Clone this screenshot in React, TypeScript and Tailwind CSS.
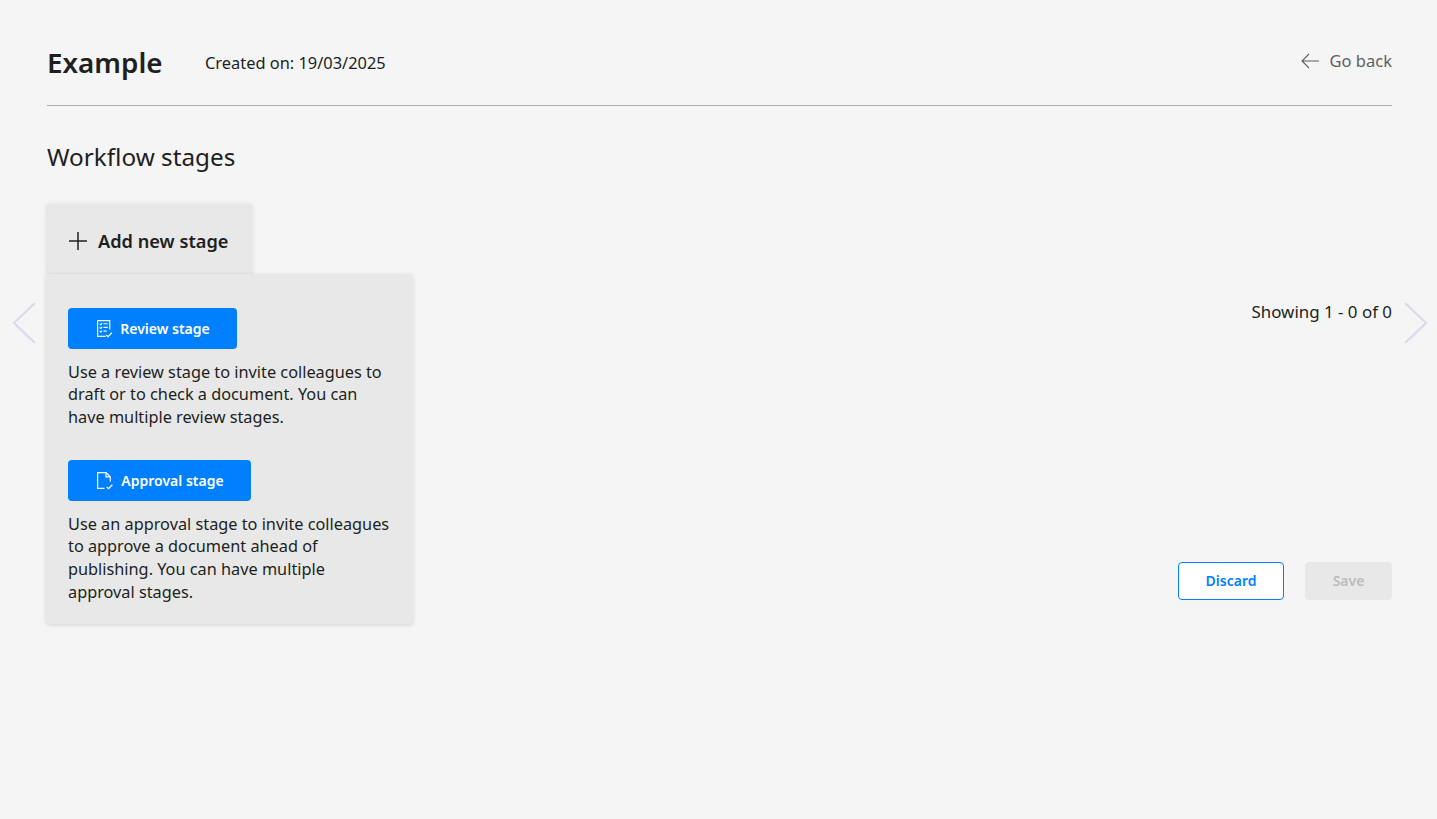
import React from "react";

const font = { fontFamily: '"Noto Sans", sans-serif' };

function ReviewIcon() {
  return (
    <svg width="17" height="19" viewBox="0 0 16 18" fill="none" stroke="white" strokeWidth="1.1">
      <path d="M9 16.5H1.5V1.5H13V10" />
      <path d="M3.5 4.5l1 1 1.2-1.6M3.5 8l1 1 1.2-1.6M3.5 11.5l1 1 1.2-1.6" strokeWidth="1" />
      <path d="M7 4.5h4M7 8h4M7 11.5h3" />
      <path d="M9.5 15l1.8 1.8L15 13" />
    </svg>
  );
}

function ApprovalIcon() {
  return (
    <svg width="18" height="19" viewBox="0 0 17 18" fill="none" stroke="white" strokeWidth="1.1">
      <path d="M8 16.5H1.5V1.5H9.5L13.5 5.5V10" />
      <path d="M9.5 1.5V5.5H13.5" />
      <path d="M10 15l1.8 1.8L15.5 13" />
    </svg>
  );
}

function Chevron({ left }: { left?: boolean }) {
  return (
    <svg width="26" height="44" viewBox="0 0 26 44" fill="none" stroke="#dfdae9" strokeWidth="2.4">
      <path d={left ? "M24 2L3 22l21 20" : "M2 2l21 20L2 42"} />
    </svg>
  );
}

export default function App() {
  return (
    <div className="relative h-[819px] bg-[#f5f5f5] pl-[47px] pr-[45px] pt-[40px] text-[#201f1e] overflow-hidden" style={font}>
      <header className="flex items-start justify-between border-b border-[#ababab] h-[66px]">
        <div className="flex items-center h-[46px]">
          <h1 className="w-[158px] pb-[1px] text-[27.8px] font-semibold leading-[45px]">Example</h1>
          <span className="text-[16.4px] leading-[46px]">Created on: 19/03/2025</span>
        </div>
        <a className="flex items-center gap-[11px] h-[42px] text-[16.5px] text-[#605e5c]">
          <svg width="18" height="16" viewBox="0 0 18 16" fill="none" stroke="#605e5c" strokeWidth="1.1">
            <path d="M8 1L1 8l7 7M1 8h17" />
          </svg>
          Go back
        </a>
      </header>

      <h2 className="mt-[33px] text-[24.3px] leading-[36px] font-normal">Workflow stages</h2>

      <div className="mt-[29px] flex">
        <div className="-ml-px w-[367px] shrink-0">
          <div className="flex h-[70px] w-[207px] items-center gap-[11px] rounded-t bg-[#e8e8e8] pl-[23px] pt-[4px] shadow-[0_0_5px_rgba(0,0,0,0.08)]">
            <svg width="18" height="18" viewBox="0 0 18 18" fill="none" stroke="#201f1e" strokeWidth="1.5">
              <path d="M9 0v18M0 9h18" />
            </svg>
            <span className="pt-[1px] text-[18.2px] font-semibold">Add new stage</span>
          </div>
          <div className="relative h-[350px] rounded-b rounded-tr bg-[#e8e8e8] px-[22px] pt-[34px] shadow-[0_1px_4px_rgba(0,0,0,0.14)]">
            <button className="flex h-[41px] w-[169px] items-center justify-center gap-[7px] rounded bg-[#0080ff] pl-[1px] text-[14px] font-semibold text-white">
              <ReviewIcon />
              Review stage
            </button>
            <p className="mt-[11.7px] w-[324px] text-[16.3px] leading-[22.7px]">
              Use a review stage to invite colleagues to draft or to check a document. You can have multiple review stages.
            </p>
            <button className="mt-[31.3px] flex h-[41px] w-[183px] items-center justify-center gap-[7px] rounded bg-[#0080ff] pl-[1px] text-[14px] font-semibold text-white">
              <ApprovalIcon />
              Approval stage
            </button>
            <p className="mt-[11.7px] w-[324px] text-[16.3px] leading-[22.7px]">
              Use an approval stage to invite colleagues to approve a document ahead of publishing. You can have multiple approval stages.
            </p>
          </div>
        </div>

        <div className="flex h-[396px] flex-1 flex-col items-end pt-[96px]">
          <span className="text-[16.9px] leading-[24px]">Showing 1 - 0 of 0</span>
          <div className="mt-auto flex gap-[21px]">
            <button className="h-[38px] w-[106px] rounded-sm border border-[#0080ff] bg-white pb-[2px] text-[14px] font-semibold text-[#0080ff]">Discard</button>
            <button className="h-[38px] w-[87px] rounded-sm bg-[#e8e8e8] pb-[2px] text-[14px] font-semibold text-[#bcbcbc]">Save</button>
          </div>
        </div>
      </div>

      <div className="absolute left-[11px] top-[301px]"><Chevron left /></div>
      <div className="absolute left-[1403px] top-[301px]"><Chevron /></div>
    </div>
  );
}
